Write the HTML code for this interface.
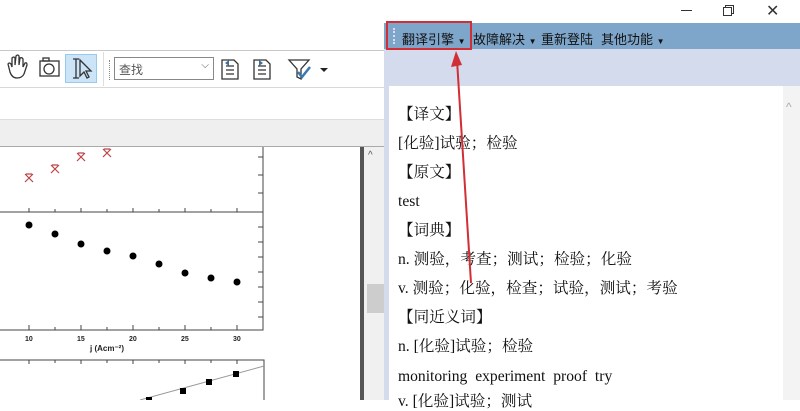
<!DOCTYPE html>
<html><head><meta charset="utf-8"><style>
*{margin:0;padding:0;box-sizing:border-box}
body{width:800px;height:400px;overflow:hidden;background:#fff;position:relative;font-family:"Liberation Sans","Noto Sans CJK SC",sans-serif}
.a{position:absolute}
.t{position:absolute;left:398px;font-family:"Liberation Serif","Noto Serif CJK SC",serif;font-size:15.6px;color:#111;white-space:nowrap;line-height:18px}
.m{position:absolute;top:29px;font-size:13px;color:#111;white-space:nowrap}
</style></head><body>
<!-- left app -->
<div class="a" style="left:0;top:50px;width:384px;height:1px;background:#c8c8c8"></div>
<div class="a" style="left:0;top:87px;width:384px;height:1px;background:#d8d8d8"></div>
<div class="a" style="left:0;top:119px;width:384px;height:28px;background:#efefef;border-top:1px solid #ddd;border-bottom:1px solid #aaa"></div>
<div class="a" style="left:65px;top:54px;width:32px;height:29px;background:#cce4f7;border:1px solid #99c9ef"></div>
<div class="a" style="left:103px;top:52px;width:1px;height:34px;background:#ddd"></div>
<div class="a" style="left:109px;top:60px;width:1px;height:20px;border-left:1px dotted #888"></div>
<div class="a" style="left:114px;top:57px;width:100px;height:23px;border:1px solid #888;background:#fff;font-size:12px;color:#555;padding:3px 4px">查找<span style="position:absolute;right:4px;top:2px;font-size:10px">⌵</span></div>
<svg class="a" style="left:0;top:50px" width="340" height="37">
<g fill="none" stroke="#333" stroke-width="1.3">
<path d="M10 22 L8 14 Q9 12 11 14 L12 17 L12 8 Q14 6 15 8 L15 15 L16 6 Q18 4 19 6 L19 15 L20 8 Q22 7 23 9 L23 17 L25 13 Q27 12 27 15 L24 24 Q22 28 17 28 Q12 28 10 22Z"/>
<rect x="40" y="11" width="19" height="15"/><rect x="43" y="8" width="6" height="3"/><circle cx="49" cy="19" r="5"/>
<path d="M73 9 H79 M76 9 V28 M73 28 H79"/>
<path d="M80 10 L80 26 L84 22 L87 28 L89 27 L86 21 L91 21 Z"/>
<path d="M222 10 H234 L238 14 V29 H222 Z M226 16 H234 M226 20 H234 M226 24 H234"/>
<path d="M254 10 H266 L270 14 V29 H254 Z M258 16 H266 M258 20 H266 M258 24 H266"/>
<path d="M289 10 H309 L301 19 V29 L297 27 V19 Z"/>
</g>
<path d="M225 13 L229 10 V16 Z M263 13 L259 10 V16 Z" fill="#3a6fa0"/>
<path d="M298 22 L302 27 L310 17" stroke="#3a78b0" stroke-width="2.5" fill="none"/>
<path d="M320 18 H328 L324 22 Z" fill="#222"/>
</svg>
<!-- chart -->
<svg class="a" style="left:0;top:147px" width="360" height="253">
<g stroke="#444" stroke-width="1" fill="none">
<path d="M263 0 V183 H0 M0 65 H263 M0 213 H264 V253"/>
<path d="M258 10 H263 M258 28 H263 M258 46 H263 M258 80 H263 M258 95 H263 M258 110 H263 M258 125 H263 M258 140 H263 M258 155 H263 M258 170 H263"/>
<path d="M29 65 V61 M55 65 V62 M81 65 V61 M107 65 V62 M133 65 V61 M159 65 V62 M185 65 V61 M211 65 V62 M237 65 V61"/>
<path d="M29 183 V178 M55 183 V180 M81 183 V178 M107 183 V180 M133 183 V178 M159 183 V180 M185 183 V178 M211 183 V180 M237 183 V178"/>
<path d="M29 213 V217 M55 213 V216 M81 213 V217 M107 213 V216 M133 213 V217 M159 213 V216 M185 213 V217 M211 213 V216 M237 213 V217"/>
<path d="M140 253 L264 219" stroke="#999"/>
</g>
<g stroke="#b44" stroke-width="1.2" fill="none">
<path d="M25 27 L33 35 M33 27 L25 35 M26 27 H32"/><path d="M51 18 L59 26 M59 18 L51 26 M52 18 H58"/><path d="M77 6 L85 14 M85 6 L77 14 M78 6 H84"/><path d="M103 2 L111 10 M111 2 L103 10 M104 2 H110"/>
</g>
<g fill="#000"><circle cx="29" cy="78" r="3.5"/><circle cx="55" cy="87" r="3.5"/><circle cx="81" cy="97" r="3.5"/><circle cx="107" cy="104" r="3.5"/><circle cx="133" cy="109" r="3.5"/><circle cx="159" cy="117" r="3.5"/><circle cx="185" cy="126" r="3.5"/><circle cx="211" cy="131" r="3.5"/><circle cx="237" cy="135" r="3.5"/>
<rect x="146" y="250" width="6" height="6"/><rect x="180" y="241" width="6" height="6"/><rect x="206" y="232" width="6" height="6"/><rect x="233" y="224" width="6" height="6"/></g>
<g font-size="7" font-weight="bold" fill="#222" font-family="Liberation Sans"><text x="25" y="194">10</text><text x="77" y="194">15</text><text x="129" y="194">20</text><text x="181" y="194">25</text><text x="233" y="194">30</text>
<text x="90" y="204" font-size="8">j (Acm⁻²)</text><text x="-3" y="88" font-size="9">)</text><text x="-3" y="234" font-size="9">)</text></g>
</svg>
<div class="a" style="left:360px;top:147px;width:4px;height:253px;background:#555"></div>
<div class="a" style="left:364px;top:147px;width:20px;height:253px;background:#f0f0f0"></div>
<div class="a" style="left:367px;top:284px;width:17px;height:29px;background:#cdcdcd"></div>
<div class="a" style="left:368px;top:150px;font-size:10px;color:#555">^</div>
<!-- right panel -->
<div class="a" style="left:384px;top:0;width:416px;height:23px;background:#fff"></div>
<div class="a" style="left:681px;top:10px;width:11px;height:1px;background:#333"></div>
<div class="a" style="left:725px;top:5px;width:9px;height:9px;border:1px solid #333"></div>
<div class="a" style="left:723px;top:7px;width:9px;height:9px;border:1px solid #333;background:#fff"></div>
<div class="a" style="left:766px;top:1px;font-size:16px;color:#333">✕</div>
<div class="a" style="left:384px;top:23px;width:416px;height:26px;background:#7ea6cb"></div>
<div class="a" style="left:384px;top:49px;width:416px;height:351px;background:#d3dbec"></div>
<div class="a" style="left:389px;top:86px;width:394px;height:314px;background:#fff"></div>
<div class="a" style="left:783px;top:86px;width:17px;height:314px;background:#f3f3f3"></div>
<div class="a" style="left:786px;top:100px;font-size:12px;color:#aaa">^</div>
<div class="a" style="left:393px;top:28px;width:2px;height:16px;border-left:2px dotted #dde"></div>
<div class="m" style="left:402px">翻译引擎 <span style="font-size:8px">▼</span></div>
<div class="m" style="left:473px">故障解决 <span style="font-size:8px">▼</span></div>
<div class="m" style="left:541px">重新登陆</div>
<div class="m" style="left:601px">其他功能 <span style="font-size:8px">▼</span></div>
<div class="a" style="left:386px;top:21px;width:86px;height:29px;border:2px solid #d22e35"></div>
<div class="t" style="top:106px">【译文】</div>
<div class="t" style="top:135px">[化验]试验；检验</div>
<div class="t" style="top:164px">【原文】</div>
<div class="t" style="top:193px">test</div>
<div class="t" style="top:222px">【词典】</div>
<div class="t" style="top:251px">n. 测验，考查；测试；检验；化验</div>
<div class="t" style="top:280px">v. 测验；化验，检查；试验，测试；考验</div>
<div class="t" style="top:309px">【同近义词】</div>
<div class="t" style="top:338px">n. [化验]试验；检验</div>
<div class="t" style="top:368px;word-spacing:4px">monitoring experiment proof try</div>
<div class="t" style="top:393px">v. [化验]试验；测试</div>
<svg class="a" style="left:440px;top:45px" width="40" height="245">
<path d="M31 238 L17 15" stroke="#d22e35" stroke-width="2"/>
<path d="M16 6 L11 22 L22 20 Z" fill="#d22e35"/>
</svg>
</body></html>
